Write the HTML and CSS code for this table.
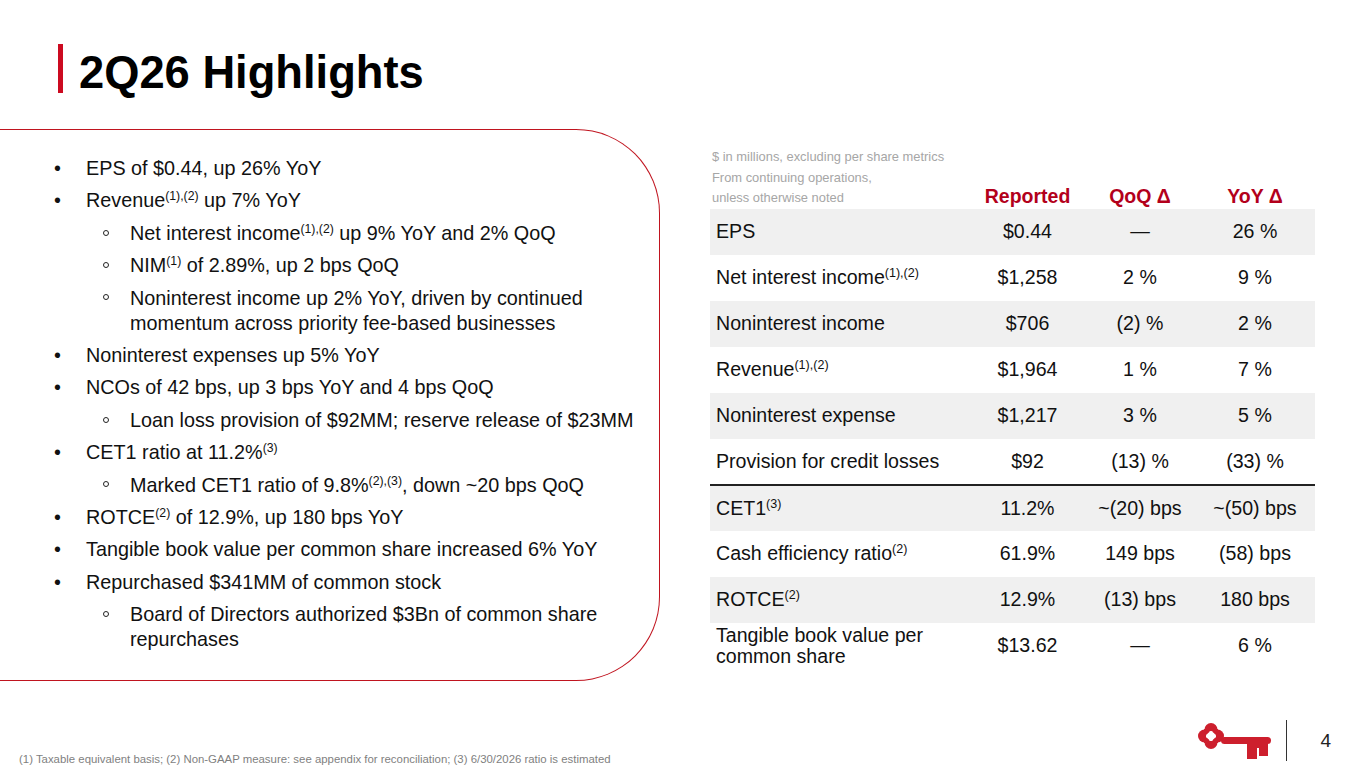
FILE: index.html
```html
<!DOCTYPE html>
<html lang="en">
<head>
<meta charset="utf-8">
<title>2Q26 Highlights</title>
<link rel="stylesheet" href="styles.css">
</head>
<body>
<header class="title">
  <span class="title-bar"></span>
  <h1>2Q26 Highlights</h1>
</header>

<main class="content">
  <section class="highlights">
    <ul class="list">
      <li class="l1"><span class="mk">•</span><span>EPS of $0.44, up 26% YoY</span></li>
      <li class="l1"><span class="mk">•</span><span>Revenue<sup>(1),(2)</sup> up 7% YoY</span></li>
      <li class="l2"><span class="mk"><i class="ring"></i></span><span>Net interest income<sup>(1),(2)</sup> up 9% YoY and 2% QoQ</span></li>
      <li class="l2"><span class="mk"><i class="ring"></i></span><span>NIM<sup>(1)</sup> of 2.89%, up 2 bps QoQ</span></li>
      <li class="l2"><span class="mk"><i class="ring"></i></span><span>Noninterest income up 2% YoY, driven by continued<br>momentum across priority fee-based businesses</span></li>
      <li class="l1"><span class="mk">•</span><span>Noninterest expenses up 5% YoY</span></li>
      <li class="l1"><span class="mk">•</span><span>NCOs of 42 bps, up 3 bps YoY and 4 bps QoQ</span></li>
      <li class="l2"><span class="mk"><i class="ring"></i></span><span>Loan loss provision of $92MM; reserve release of $23MM</span></li>
      <li class="l1"><span class="mk">•</span><span>CET1 ratio at 11.2%<sup>(3)</sup></span></li>
      <li class="l2"><span class="mk"><i class="ring"></i></span><span>Marked CET1 ratio of 9.8%<sup>(2),(3)</sup>, down ~20 bps QoQ</span></li>
      <li class="l1"><span class="mk">•</span><span>ROTCE<sup>(2)</sup> of 12.9%, up 180 bps YoY</span></li>
      <li class="l1"><span class="mk">•</span><span>Tangible book value per common share increased 6% YoY</span></li>
      <li class="l1"><span class="mk">•</span><span>Repurchased $341MM of common stock</span></li>
      <li class="l2"><span class="mk"><i class="ring"></i></span><span>Board of Directors authorized $3Bn of common share<br>repurchases</span></li>
    </ul>
  </section>

  <section class="metrics">
    <table class="tbl">
      <colgroup>
        <col class="c-label"><col class="c-rep"><col class="c-qoq"><col class="c-yoy">
      </colgroup>
      <thead>
        <tr>
          <th class="notes">$ in millions, excluding per share metrics<br>From continuing operations,<br>unless otherwise noted</th>
          <th class="colhead">Reported</th>
          <th class="colhead">QoQ Δ</th>
          <th class="colhead">YoY Δ</th>
        </tr>
      </thead>
      <tbody>
        <tr class="shade"><td>EPS</td><td>$0.44</td><td>—</td><td>26 %</td></tr>
        <tr><td>Net interest income<sup>(1),(2)</sup></td><td>$1,258</td><td>2 %</td><td>9 %</td></tr>
        <tr class="shade"><td>Noninterest income</td><td>$706</td><td>(2) %</td><td>2 %</td></tr>
        <tr><td>Revenue<sup>(1),(2)</sup></td><td>$1,964</td><td>1 %</td><td>7 %</td></tr>
        <tr class="shade"><td>Noninterest expense</td><td>$1,217</td><td>3 %</td><td>5 %</td></tr>
        <tr><td>Provision for credit losses</td><td>$92</td><td>(13) %</td><td>(33) %</td></tr>
        <tr class="shade rule"><td>CET1<sup>(3)</sup></td><td>11.2%</td><td>~(20) bps</td><td>~(50) bps</td></tr>
        <tr><td>Cash efficiency ratio<sup>(2)</sup></td><td>61.9%</td><td>149 bps</td><td>(58) bps</td></tr>
        <tr class="shade"><td>ROTCE<sup>(2)</sup></td><td>12.9%</td><td>(13) bps</td><td>180 bps</td></tr>
        <tr class="two"><td>Tangible book value per<br>common share</td><td>$13.62</td><td>—</td><td>6 %</td></tr>
      </tbody>
    </table>
  </section>
</main>

<footer class="foot">
  <p class="footnote">(1) Taxable equivalent basis; (2) Non-GAAP measure: see appendix for reconciliation; (3) 6/30/2026 ratio is estimated</p>
  <div class="brand">
    <svg class="key" width="76" height="40" viewBox="0 0 76 40" aria-label="Key logo">
      <g fill="#cd1f2d">
        <circle cx="14" cy="8.5" r="6.5"/>
        <circle cx="14" cy="21.5" r="6.5"/>
        <circle cx="7.5" cy="15" r="6.5"/>
        <circle cx="20.5" cy="15" r="6.5"/>
        <rect x="7" y="8" width="14" height="14"/>
        <rect x="24" y="16" width="50" height="7" rx="3.5"/>
        <rect x="50" y="19" width="21" height="8"/>
        <rect x="50" y="22" width="10" height="16"/>
        <rect x="62" y="22" width="9" height="13"/>
      </g>
      <g fill="#fff">
        <rect x="12" y="10" width="4" height="10" rx="1.6"/>
        <rect x="9" y="13" width="10" height="4" rx="1.6"/>
        <circle cx="12.2" cy="13.2" r="1.8"/>
        <circle cx="15.8" cy="13.2" r="1.8"/>
        <circle cx="12.2" cy="16.8" r="1.8"/>
        <circle cx="15.8" cy="16.8" r="1.8"/>
      </g>
    </svg>
    <span class="divider"></span>
    <span class="page">4</span>
  </div>
</footer>
</body>
</html>
```

FILE: styles.css
```css
* { box-sizing: border-box; }

html, body {
  margin: 0;
  padding: 0;
  background: #fff;
}

body {
  width: 1365px;
  height: 768px;
  overflow: hidden;
  display: flex;
  flex-direction: column;
  font-family: "Liberation Sans", Arial, sans-serif;
  color: #111;
}

/* ---------- title ---------- */
.title {
  display: flex;
  align-items: flex-start;
  padding: 44px 0 0 58px;
}

.title-bar {
  width: 5px;
  height: 49px;
  background: #cc0a20;
  flex: none;
}

.title h1 {
  margin: 0 0 0 16px;
  padding-top: 4px;
  font-size: 45.3px;
  line-height: 49px;
  font-weight: 700;
  color: #000;
  letter-spacing: 0;
}

/* ---------- content ---------- */
.content {
  display: flex;
  align-items: flex-start;
  gap: 50px;
  margin-top: 32px;
}

.highlights {
  width: 662px;
  height: 552px;
  margin-left: -2px;
  border: 1.5px solid #c0141f;
  border-left: none;
  border-radius: 0 84px 84px 0;
  padding: 26px 0 0 0;
  flex: none;
}

.list {
  list-style: none;
  margin: 0;
  padding: 0;
  font-size: 19.8px;
  line-height: 25px;
  color: #111;
}

.list li {
  display: grid;
  margin-bottom: 7.4px;
}

.list li.l1 {
  grid-template-columns: 32px 1fr;
  padding-left: 56px;
}

.list li.l2 {
  grid-template-columns: 27px 1fr;
  padding-left: 105px;
}

.mk {
  display: block;
}

.ring {
  display: inline-block;
  width: 6px;
  height: 6px;
  border: 1px solid #222;
  border-radius: 50%;
  vertical-align: middle;
  position: relative;
  top: -2px;
}

sup {
  font-size: 0.62em;
  line-height: 0;
  vertical-align: 0.55em;
}

/* ---------- table ---------- */
.metrics {
  padding-top: 18px;
  flex: none;
}

.tbl {
  width: 605px;
  border-collapse: collapse;
  table-layout: fixed;
}

.c-label { width: 260px; }
.c-rep { width: 115px; }
.c-qoq { width: 110px; }
.c-yoy { width: 120px; }

.tbl th {
  padding: 0;
  font-weight: 700;
  vertical-align: bottom;
}

.tbl th.notes {
  text-align: left;
  font-weight: 400;
  font-size: 12.9px;
  line-height: 20.5px;
  color: #a6a6a6;
  padding-left: 2px;
  white-space: nowrap;
}

.tbl th.colhead {
  text-align: center;
  font-size: 19.5px;
  line-height: 22px;
  color: #b3001b;
  padding-bottom: 2px;
}

.tbl td {
  height: 46px;
  padding: 0;
  text-align: center;
  vertical-align: middle;
  font-size: 19.6px;
  line-height: 21px;
  color: #111;
}

.tbl td:first-child {
  text-align: left;
  padding-left: 6px;
}

.tbl tr.shade td {
  background: #f0f0f0;
}

.tbl tr.rule td {
  border-top: 2px solid #222;
}

.tbl td sup {
  font-size: 0.64em;
}

/* ---------- footer ---------- */
.foot {
  margin-top: auto;
  display: flex;
  align-items: flex-end;
  justify-content: space-between;
  padding: 0 34px 2px 19px;
}

.footnote {
  margin: 0;
  font-size: 11.4px;
  line-height: 14px;
  color: #7f7f7f;
}

.brand {
  display: flex;
  align-items: center;
  margin-bottom: 5px;
}

.key {
  display: block;
}

.divider {
  width: 1.5px;
  height: 41px;
  background: #333;
  margin-left: 13px;
}

.page {
  margin-left: 33px;
  font-size: 19px;
  color: #222;
}
```
